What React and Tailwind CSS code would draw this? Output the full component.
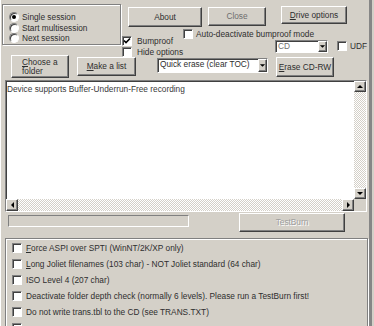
const raised = 'border border-t-white border-l-white border-r-[#404040] border-b-[#404040] shadow-[inset_-1px_-1px_0_#808080]';
const sunken = 'border border-t-[#808080] border-l-[#808080] border-r-white border-b-white shadow-[inset_1px_1px_0_#404040]';
const etched = 'border border-[#808080] shadow-[inset_1px_1px_0_#fff,1px_1px_0_#fff]';
const dither = 'bg-[image:repeating-conic-gradient(#fff_0_25%,#d4d0c8_0_50%)] bg-[length:2px_2px]';

const Btn = ({ className = '', children }) => (
  <div className={`flex items-center justify-center bg-[#d4d0c8] whitespace-nowrap ${raised} ${className}`}>{children}</div>
);

const Check = ({ on }) => (
  <span className={`w-[10px] h-[10px] shrink-0 bg-white flex items-center justify-center ${sunken}`}>
    {on && (
      <svg width="8" height="8" viewBox="0 0 8 8">
        <path d="M1 3.5 L3 5.5 L7 1.5" fill="none" stroke="#000" strokeWidth="1.6" />
      </svg>
    )}
  </span>
);

const Radio = ({ on }) => (
  <span className="w-[10px] h-[10px] shrink-0 rounded-full bg-white border border-t-[#808080] border-l-[#808080] border-r-white border-b-white shadow-[inset_1px_1px_0_#404040] flex items-center justify-center">
    {on && <span className="w-[4px] h-[4px] rounded-full bg-black" />}
  </span>
);

const Arrow = ({ dir }) => {
  const pts = { up: '1,4 4,1 7,4', down: '1,1 7,1 4,4', left: '4,1 4,7 1,4', right: '1,1 1,7 4,4' }[dir];
  const w = dir === 'up' || dir === 'down' ? 8 : 5;
  const h = dir === 'up' || dir === 'down' ? 5 : 8;
  return (
    <svg width={w} height={h} viewBox={`0 0 ${w} ${h}`}>
      <polygon points={pts} fill="#000" />
    </svg>
  );
};

const Select = ({ className = '', value, gray }) => (
  <div className={`flex items-stretch bg-white ${sunken} ${className}`}>
    <span className={`flex-1 pl-[2px] leading-[11px] whitespace-nowrap overflow-hidden ${gray ? 'text-[#707070]' : ''}`}>{value}</span>
    <span className={`w-[9px] flex items-center justify-center bg-[#d4d0c8] ${raised}`}>
      <Arrow dir="down" />
    </span>
  </div>
);

const OPTIONS = [
  <><u>F</u>orce ASPI over SPTI (WinNT/2K/XP only)</>,
  <><u>L</u>ong Joliet filenames (103 char) - NOT Joliet standard (64 char)</>,
  'ISO Level 4 (207 char)',
  'Deactivate folder depth check (normally 6 levels). Please run a TestBurn first!',
  'Do not write trans.tbl to the CD (see TRANS.TXT)',
  '',
];

export default function App() {
  return (
    <div className="flex w-[374px] h-[326px] overflow-hidden bg-[#d4d0c8] text-[8.3px] text-[#2e2e2e] font-['Liberation_Sans',Arial,sans-serif]">
      <div className="w-[369px] shrink-0 flex flex-col shadow-[inset_1px_0_0_#fff]">
        {/* top row */}
        <div className="flex items-start h-[55px] shrink-0">
          <div className={`ml-[2px] mt-[4px] w-[119px] h-[41px] pl-[6px] pt-[7px] flex flex-col ${etched}`}>
            {[['Single session', true], ['Start multisession', false], ['Next session', false]].map(([t, on]) => (
              <div key={t} className="h-[10.5px] flex items-center gap-[3px] whitespace-nowrap">
                <Radio on={on} />
                <span>{t}</span>
              </div>
            ))}
          </div>

          <div className="ml-[1px] w-[247px] flex flex-col">
            <div className="flex items-start h-[28px]">
              <Btn className="ml-[6px] mt-[7px] w-[74px] h-[20px]">About</Btn>
              <Btn className="ml-[6px] mt-[7px] w-[58px] h-[19px] text-[#6e6e6e]">Close</Btn>
              <Btn className="ml-[15px] mt-[6px] w-[66px] h-[18px]"><span><u>D</u>rive options</span></Btn>
            </div>
            <div className="flex items-start">
              <div className="w-[61px] mt-[8px] flex flex-col gap-[1px] whitespace-nowrap">
                <div className="h-[10px] flex items-center gap-[5px]"><Check on /><span>Bumproof</span></div>
                <div className="h-[10px] flex items-center gap-[5px]"><Check /><span>Hide options</span></div>
              </div>
              <div className="w-[92px] mt-[1px] h-[10px] flex items-center gap-[3px] whitespace-nowrap">
                <Check /><span>Auto-deactivate bumproof mode</span>
              </div>
              <Select className="mt-[12px] w-[53px] h-[13px]" value="CD" gray />
              <div className="ml-[9px] mt-[13px] h-[10px] flex items-center gap-[3px]">
                <Check /><span>UDF</span>
              </div>
            </div>
          </div>
        </div>

        {/* second row */}
        <div className="flex items-start h-[25px] shrink-0">
          <Btn className="ml-[11px] w-[58px] h-[23px] !justify-start pl-[10px]">
            <span className="leading-[9px] text-left"><u>C</u>hoose a<br />folder</span>
          </Btn>
          <Btn className="ml-[8px] mt-[2px] w-[59px] h-[19px]"><span><u>M</u>ake a list</span></Btn>
          <Select className="ml-[21px] mt-[3px] w-[111px] h-[15px]" value="Quick erase (clear TOC)" />
          <Btn className="ml-[8px] mt-[2px] w-[58px] h-[20px]"><span><u>E</u>rase CD-RW</span></Btn>
        </div>

        {/* log area */}
        <div className={`ml-[5px] w-[362px] h-[132px] shrink-0 flex flex-col bg-white ${sunken}`}>
          <div className="flex-1 flex min-h-0">
            <div className="flex-1 pl-[1px] pt-[3px] leading-[10px] whitespace-nowrap text-[#3a3a3a]">Device supports Buffer-Underrun-Free recording</div>
            <div className="w-[12px] flex flex-col">
              <Btn className="h-[11px] w-[12px]"><Arrow dir="up" /></Btn>
              <div className={`flex-1 ${dither}`} />
              <Btn className="h-[11px] w-[12px]"><Arrow dir="down" /></Btn>
            </div>
          </div>
          <div className="flex h-[12px]">
            <Btn className="w-[12px] h-[12px]"><Arrow dir="left" /></Btn>
            <div className={`flex-1 ${dither}`} />
            <Btn className="w-[12px] h-[12px]"><Arrow dir="right" /></Btn>
            <div className="w-[12px] bg-[#d4d0c8]" />
          </div>
        </div>

        {/* progress row */}
        <div className="flex items-start mt-[1px] h-[19px] shrink-0">
          <div className="ml-[8px] mt-[2px] w-[181px] h-[12px] border border-t-[#808080] border-l-[#808080] border-r-white border-b-white" />
          <Btn className="ml-[50px] w-[106px] h-[19px] text-[#a0a0a0] [text-shadow:1px_1px_0_#fff]">TestBurn</Btn>
        </div>

        {/* options group */}
        <div className={`mt-[6px] ml-[5px] w-[363px] h-[100px] shrink-0 pl-[6px] pt-[1px] flex flex-col ${etched}`}>
          {OPTIONS.map((label, i) => (
            <div key={i} className="h-[16px] shrink-0 flex items-center gap-[4px] whitespace-nowrap">
              <Check /><span>{label}</span>
            </div>
          ))}
        </div>
      </div>
      <div className="w-[3px] shrink-0 bg-[#868686]" />
      <div className="flex-1 bg-[#d4d0c8]" />
    </div>
  );
}
